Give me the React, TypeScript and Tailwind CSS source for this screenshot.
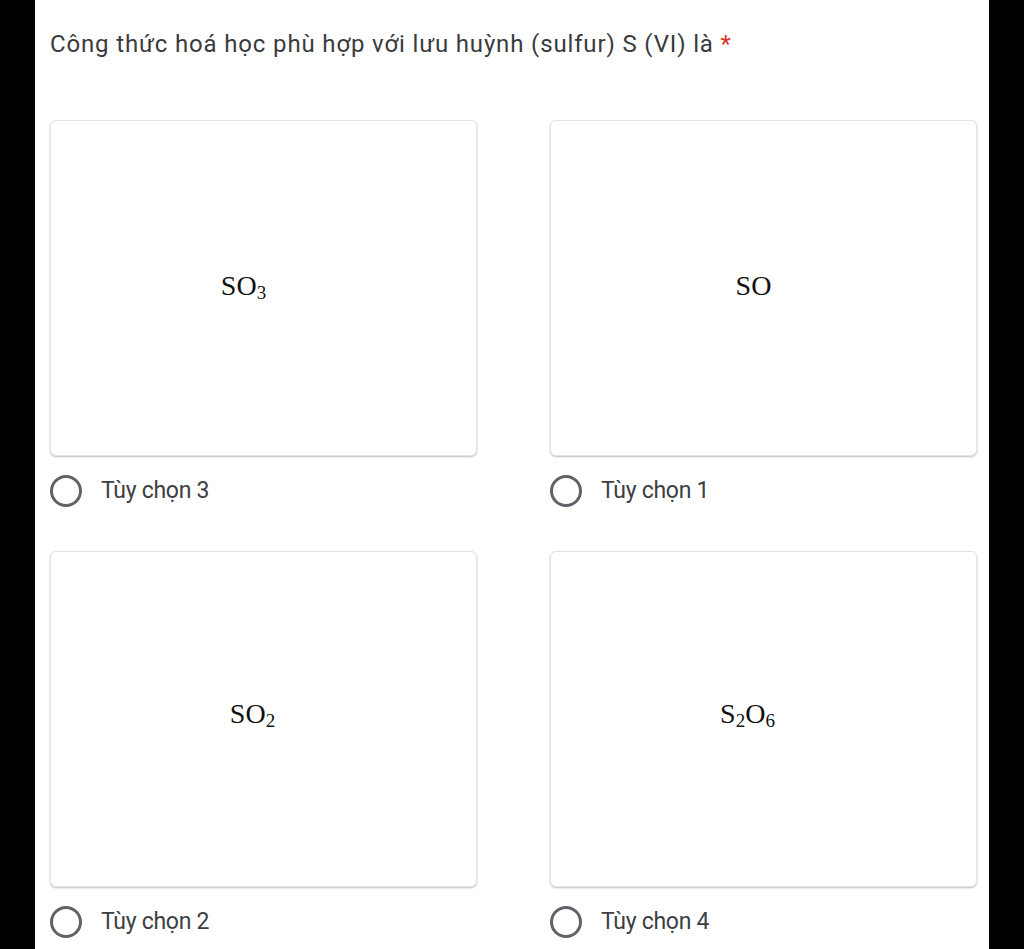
import React from "react";

function Formula({ parts }: { parts: { t: string; sub?: boolean }[] }) {
  return (
    <span className="text-[28px] leading-none text-[#111]" style={{ fontFamily: '"Liberation Serif", "Times New Roman", serif' }}>
      {parts.map((p, i) =>
        p.sub ? (
          <span key={i} className="text-[19px] relative top-[4px]">
            {p.t}
          </span>
        ) : (
          <span key={i}>{p.t}</span>
        )
      )}
    </span>
  );
}

function Option({ formula, label, shift }: { formula: React.ReactNode; label: string; shift: string }) {
  return (
    <div className="flex flex-col">
      <div className="h-[336px] rounded-[6px] border border-[#e3e3e3] bg-white shadow-[0_1px_2px_rgba(0,0,0,0.25)] flex items-center justify-center">
        <div className={shift}>{formula}</div>
      </div>
      <div className="mt-[18px] flex items-center">
        <div className="w-[32px] h-[32px] rounded-full border-[3px] border-[#5f6368]" />
        <span className="ml-[19px] text-[23px] tracking-[-0.3px] text-[#3c4043]" style={{ fontFamily: "Roboto, Arial, sans-serif" }}>
          {label}
        </span>
      </div>
    </div>
  );
}

export default function App() {
  return (
    <div className="w-full h-[949px] bg-black flex overflow-hidden">
      <div className="ml-[35px] w-[954px] h-full bg-white pl-[15px] pr-[12px] pt-[28px]">
        <div className="text-[24px] leading-[32px] tracking-[0.85px] text-[#3a3b3d]" style={{ fontFamily: "Roboto, Arial, sans-serif" }}>
          Công thức hoá học phù hợp với lưu huỳnh (sulfur) S (VI) là <span className="text-[#d93025]">*</span>
        </div>
        <div className="mt-[60px] grid grid-cols-[427px_427px] gap-x-[73px] gap-y-[42px]">
          <Option formula={<Formula parts={[{ t: "SO" }, { t: "3", sub: true }]} />} label="Tùy chọn 3" shift="pr-[40px] -mt-[4px]" />
          <Option formula={<Formula parts={[{ t: "SO" }]} />} label="Tùy chọn 1" shift="pr-[20px] -mt-[4px]" />
          <Option formula={<Formula parts={[{ t: "SO" }, { t: "2", sub: true }]} />} label="Tùy chọn 2" shift="pr-[22px] -mt-[8px]" />
          <Option formula={<Formula parts={[{ t: "S" }, { t: "2", sub: true }, { t: "O" }, { t: "6", sub: true }]} />} label="Tùy chọn 4" shift="pr-[32px] -mt-[8px]" />
        </div>
      </div>
    </div>
  );
}
